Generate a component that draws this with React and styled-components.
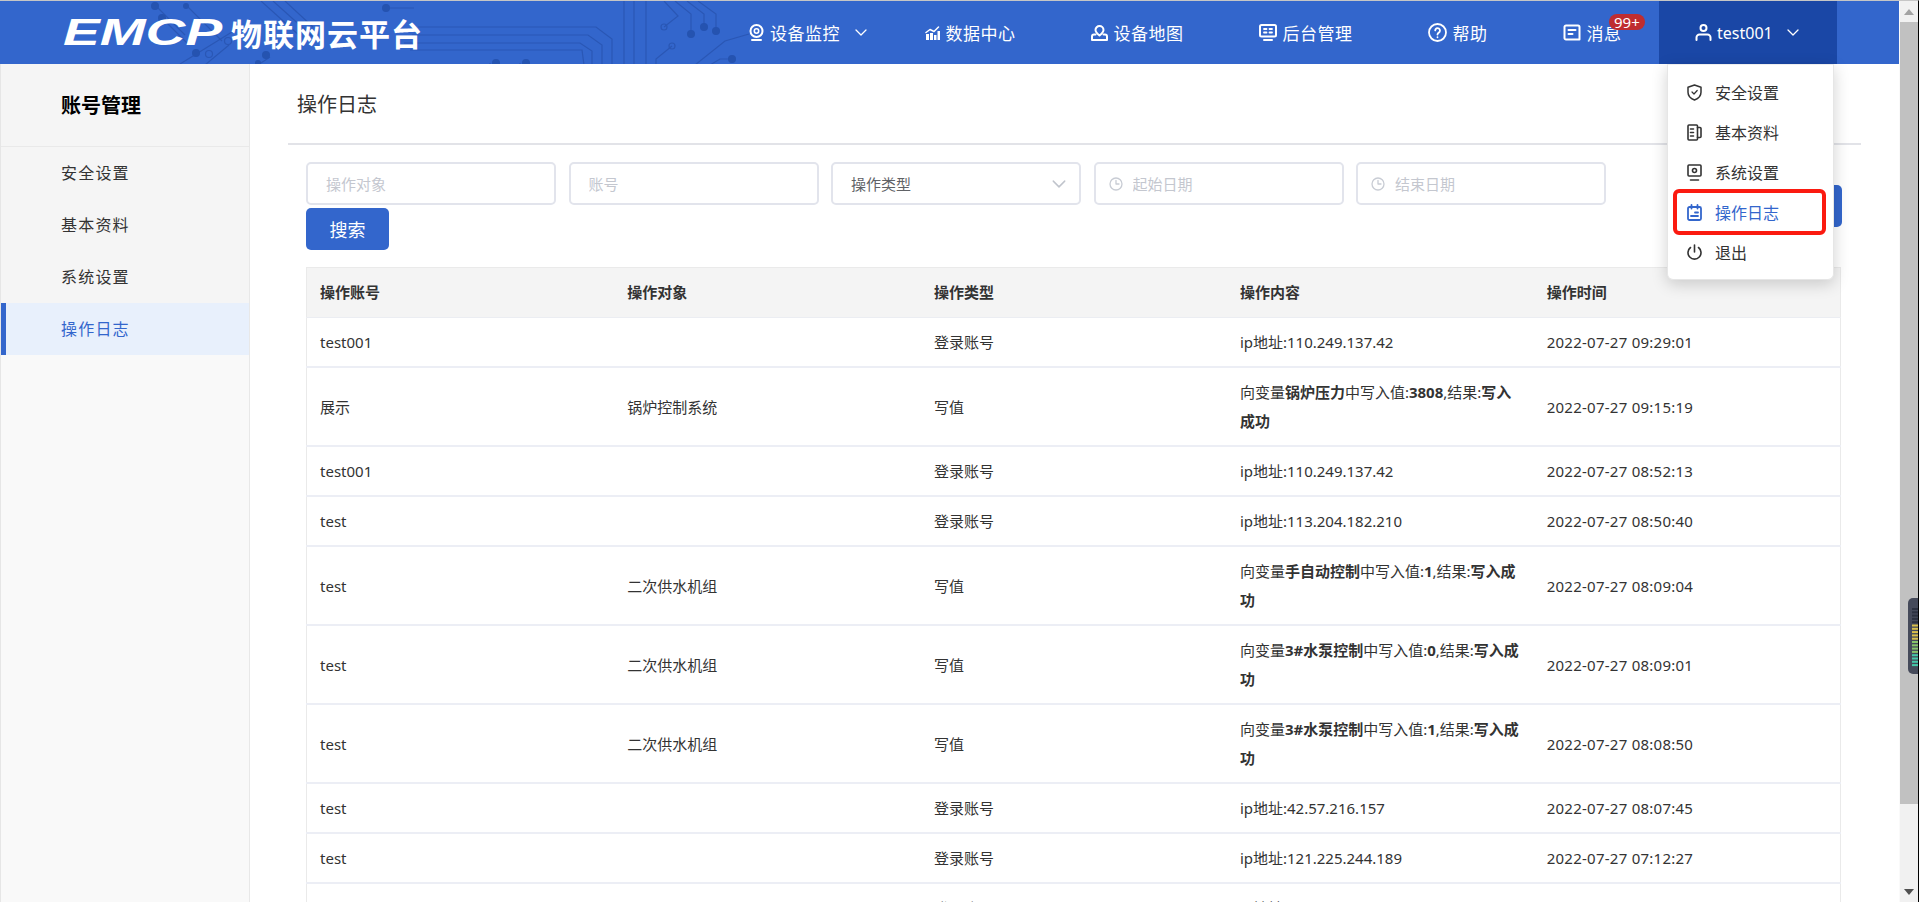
import React from "react";
import styled, { createGlobalStyle } from "styled-components";

const GlobalStyle = createGlobalStyle`
  html, body {
    margin: 0;
    padding: 0;
    height: 100%;
    overflow: hidden;
    background: #fff;
    font-family: "Noto Sans", "Noto Sans CJK SC", sans-serif;
  }
  * { box-sizing: border-box; }
`;

const Page = styled.div`
  width: 1919px;
  height: 902px;
  overflow: hidden;
  display: flex;
  flex-direction: column;
  border-top: 1px solid #c6c6c6;
  border-right: 1px solid #000;
`;

const Body = styled.div`
  flex: 1;
  min-height: 0;
  display: flex;
`;

const Main = styled.div`
  width: 1899px;
  display: flex;
  flex-direction: column;
`;

/* header */
const Header = styled.header`
  position: relative;
  height: 63px;
  flex: none;
  background: #3366cc;
  display: flex;
  align-items: center;
  justify-content: space-between;
  padding: 0 62px 0 63px;
  color: #fff;
`;

const Circuit = styled.svg`
  position: absolute;
  left: 0;
  top: 0;
  pointer-events: none;
`;

const Brand = styled.div`
  position: relative;
  display: flex;
  align-items: center;
`;

const BrandMark = styled.span`
  display: block;
  width: 168px;
  font: italic 700 36px/36px "Liberation Sans", sans-serif;
  transform: scaleX(1.53);
  transform-origin: left center;
`;

const BrandName = styled.span`
  font: 700 31px/40px "Noto Sans CJK SC", sans-serif;
  letter-spacing: 1px;
`;

const Nav = styled.nav`
  position: relative;
  display: flex;
  height: 100%;
`;

const NavItem = styled.div`
  position: relative;
  display: flex;
  align-items: center;
  gap: 6px;
  padding: 0 ${(p) => (p.$caret ? "20px" : "37.5px")} 0 37.5px;
  font: 400 17px/24px "Noto Sans CJK SC", sans-serif;
  letter-spacing: 0.5px;
`;

const NavChevron = styled.svg`
  margin-left: 9px;
`;

const Badge = styled.span`
  position: absolute;
  left: 84px;
  top: 13px;
  height: 16px;
  padding: 0 5px;
  border-radius: 8px;
  background: #bf2d30;
  font: 400 15px/16px "Noto Sans", sans-serif;
  letter-spacing: 0;
  color: #fff;
`;

const UserBlock = styled.div`
  position: relative;
  display: flex;
  align-items: center;
  gap: 5px;
  width: 178px;
  padding-left: 36px;
  background: #1a47a6;
  font: 400 16px/24px "Noto Sans", sans-serif;
`;

const UserMenu = styled.div`
  position: absolute;
  left: 8px;
  top: 63px;
  width: 167px;
  height: 216px;
  padding: 7px 0;
  z-index: 5;
  background: #fff;
  border: 1px solid #e6e6e6;
  border-top-color: #eee;
  border-radius: 0 0 6px 6px;
  box-shadow: 0 4px 16px rgba(0, 0, 0, 0.18);
  color: #333;
`;

const MenuItem = styled.div`
  position: relative;
  height: 40px;
  display: flex;
  align-items: center;
  gap: 13px;
  padding-left: 19px;
  font: 400 16px/24px "Noto Sans CJK SC", sans-serif;
  color: ${(p) => (p.$active ? "#3366cc" : "#333")};

  ${(p) =>
    p.$active &&
    `&::after {
      content: "";
      position: absolute;
      left: 5px;
      right: 7px;
      top: -3px;
      bottom: -3px;
      border: 4px solid #fb1a10;
      border-radius: 6px;
    }`}
`;

/* sidebar */
const Sidebar = styled.aside`
  width: 250px;
  flex: none;
  background: #f9f9f9;
  border-left: 1px solid #e6e6e6;
  border-right: 1px solid #e8e8e8;
`;

const SideTitle = styled.div`
  height: 83px;
  padding-left: 60px;
  background: #f5f5f5;
  border-bottom: 1px solid #e9e9e9;
  font: 700 20px/81px "Noto Sans CJK SC", sans-serif;
  color: #000;
`;

const SideList = styled.div`
  background: #f5f5f5;
`;

const SideItem = styled.div`
  height: 52px;
  padding-left: ${(p) => (p.$active ? "55px" : "60px")};
  border-left: ${(p) => (p.$active ? "5px solid #3366cc" : "none")};
  background: ${(p) => (p.$active ? "#e8f0fc" : "transparent")};
  font: 400 16px/50px "Noto Sans CJK SC", sans-serif;
  letter-spacing: 1.2px;
  color: ${(p) => (p.$active ? "#3366cc" : "#333")};
`;

/* content */
const Content = styled.main`
  flex: 1;
  min-width: 0;
  padding: 0 38px;
  overflow: hidden;
`;

const PageTitle = styled.h1`
  margin: 0;
  height: 81px;
  padding-left: 9px;
  border-bottom: 2px solid #e2e3e8;
  font: 400 20px/80px "Noto Sans CJK SC", sans-serif;
  color: #333;
`;

const Toolbar = styled.div`
  display: flex;
  justify-content: space-between;
  align-items: flex-start;
  padding: 17px 19px 0 18px;
`;

const Filters = styled.div`
  width: 1312px;
  display: flex;
  flex-wrap: wrap;
  gap: 3px 12.5px;
`;

const Field = styled.div`
  width: 250px;
  height: 43px;
  display: flex;
  align-items: center;
  gap: 10px;
  padding: 0 13px 0 ${(p) => (p.$date ? "13px" : "18px")};
  border: 2px solid #e2e4ec;
  border-radius: 5px;
  background: #fff;
`;

const FieldInput = styled.input`
  flex: 1;
  min-width: 0;
  border: 0;
  outline: 0;
  padding: 0;
  background: transparent;
  font: 400 15px/22px "Noto Sans CJK SC", sans-serif;

  &::placeholder {
    color: #c4c7cf;
    opacity: 1;
  }
`;

const SelectLabel = styled.span`
  flex: 1;
  font: 400 15px/22px "Noto Sans CJK SC", sans-serif;
  color: #606266;
`;

const PrimaryButton = styled.button`
  width: 83px;
  height: 42px;
  margin-top: ${(p) => p.$top || 0};
  border: 0;
  border-radius: 5px;
  background: #3366cc;
  color: #fff;
  font: 400 18px/42px "Noto Sans CJK SC", sans-serif;
  padding: 0;
`;

const LogTable = styled.table`
  width: 1535px;
  margin: 17px 0 0 18px;
  table-layout: fixed;
  border-collapse: collapse;
  border-left: 1px solid #eaeaea;
  border-right: 1px solid #eaeaea;
  border-top: 1px solid #eaeaea;
  font: 400 15px/29px "Noto Sans", "Noto Sans CJK SC", sans-serif;
  color: #333;
`;

const HeadCell = styled.th`
  padding: 10px 14px 10px 13px;
  background: #f4f4f4;
  border-bottom: 1px solid #ebedf2;
  text-align: left;
  font-weight: 600;

  &:nth-child(2),
  &:nth-child(3) {
    padding-left: 14px;
  }
`;

const Cell = styled.td`
  padding: 10px 11px 9px 13px;
  border-bottom: 2px solid #eceef5;
  vertical-align: middle;
  letter-spacing: ${(p) => (p.$time ? "0.25px" : "0")};

  &:nth-child(2),
  &:nth-child(3) {
    padding-left: 14px;
  }

  b {
    font-weight: 700;
  }
`;

/* fake browser scrollbar */
const ScrollTrack = styled.div`
  position: relative;
  width: 19px;
  flex: none;
  background: #f1f1f1;
  border-left: 1px solid #fafafa;
  display: flex;
  flex-direction: column;
  align-items: stretch;
`;

const ScrollArrow = styled.div`
  height: 21px;
  flex: none;
  display: flex;
  align-items: center;
  justify-content: center;
  margin-top: ${(p) => (p.$bottom ? "auto" : "0")};

  &::before {
    content: "";
    border-left: 5px solid transparent;
    border-right: 5px solid transparent;
    ${(p) =>
      p.$bottom
        ? "border-top: 6px solid #505050;"
        : "border-bottom: 6px solid #a3a3a3;"}
  }
`;

const ScrollThumb = styled.div`
  height: 782px;
  flex: none;
  background: #c1c1c1;
`;

const MeterWidget = styled.svg`
  position: absolute;
  right: 0;
  top: 597px;
`;

const Svg = ({ w, h, vb, children, color = "currentColor", sw = 2 }) => (
  <svg
    width={w}
    height={h}
    viewBox={vb || `0 0 ${w} ${h}`}
    fill="none"
    stroke={color}
    strokeWidth={sw}
    strokeLinecap="round"
    strokeLinejoin="round"
    style={{ flex: "none" }}
  >
    {children}
  </svg>
);

const IconCam = () => (
  <Svg w={15} h={17}>
    <circle cx="7.5" cy="7" r="6" />
    <circle cx="7.5" cy="7" r="2.2" strokeWidth="1.6" />
    <path d="M3 16h9" />
  </Svg>
);

const IconChart = () => (
  <Svg w={15} h={14} sw={0}>
    <path
      d="M1 8h3v6H1zM5 7h3v7H5zM9 9h2.500v5H9zM12.500 5H15v9h-2.500z"
      fill="currentColor"
    />
    <path d="M1 6.500 5 3.500l4 2 4.500-4.500" stroke="currentColor" strokeWidth="1.5" />
  </Svg>
);

const IconUserPin = () => (
  <Svg w={17} h={16}>
    <path d="M8.500 1a4 4 0 0 1 4 4c0 2.300-2.200 4-4 5.500-1.800-1.500-4-3.200-4-5.500a4 4 0 0 1 4-4z" />
    <path d="M4.500 9.500H3a2 2 0 0 0-2 2V15h15v-3.500a2 2 0 0 0-2-2h-1.500" />
  </Svg>
);

const IconAdmin = () => (
  <Svg w={18} h={17}>
    <rect x="1" y="1" width="16" height="11.500" rx="1.500" />
    <path d="M5 16h8" />
    <path d="M5 5h2.500M5 8.500h2.500M10.500 5H13M10.500 8.500H13" strokeWidth="1.800" />
  </Svg>
);

const IconHelp = () => (
  <Svg w={19} h={19} sw={1.8}>
    <circle cx="9.500" cy="9.500" r="8.500" />
    <path d="M7.200 7.400a2.400 2.400 0 1 1 3.600 2.200c-.9.500-1.300 1-1.300 2" />
    <path d="M9.500 14.200v.1" />
  </Svg>
);

const IconMessage = () => (
  <Svg w={18} h={17}>
    <path d="M3 1.500h12a1.500 1.500 0 0 1 1.500 1.500v12.500H3A1.500 1.500 0 0 1 1.500 14V3A1.500 1.500 0 0 1 3 1.500z" />
    <path d="M5.500 6h7M5.500 10h4" />
  </Svg>
);

const IconUser = () => (
  <Svg w={17} h={17}>
    <circle cx="8.500" cy="4" r="3" />
    <path d="M1.500 16v-2.500a3 3 0 0 1 3-3h8a3 3 0 0 1 3 3V16" />
  </Svg>
);

const IconChevron = ({ color = "currentColor", w = 12, h = 7 }) => (
  <NavChevron width={w} height={h} viewBox="0 0 12 7" fill="none" stroke={color} strokeWidth="1.300" strokeLinecap="round" strokeLinejoin="round">
    <path d="M1 1l5 5 5-5" />
  </NavChevron>
);

const IconShield = () => (
  <Svg w={15} h={17} sw={1.500}>
    <path d="M7.500 1 14 3.300v5c0 3.700-2.700 6.300-6.500 7.700C3.700 14.600 1 12 1 8.300v-5z" />
    <path d="m5 8 2 2 3.200-3.500" strokeWidth="1.200" />
  </Svg>
);

const IconBook = () => (
  <Svg w={15} h={17} sw={1.600}>
    <rect x="1" y="1" width="9.500" height="15" rx="1" />
    <path d="M3.500 5h3M3.500 8.500h3M3.500 12h3" />
    <path d="M10.500 3.500H13a1 1 0 0 1 1 1v8a1 1 0 0 1-1 1h-2.500" />
  </Svg>
);

const IconDisplay = () => (
  <Svg w={15} h={17} sw={1.600}>
    <rect x="1" y="1" width="13" height="11" rx="1" />
    <circle cx="7.500" cy="6.500" r="2" />
    <path d="M3.500 16h8" />
  </Svg>
);

const IconCalendar = () => (
  <Svg w={15} h={17} sw={1.800}>
    <rect x="1" y="3" width="13" height="13" rx="1.500" />
    <path d="M4.500 1v3.500M10.500 1v3.500" />
    <path d="M8 8.500h3M4 12h7" />
  </Svg>
);

const IconPower = () => (
  <Svg w={15} h={17} sw={1.600}>
    <path d="M7.500 1v7" />
    <path d="M3.500 3.500a6.500 6.500 0 1 0 8 0" />
  </Svg>
);

const IconClock = () => (
  <Svg w={14} h={14} sw={1.300} color="#c8ccd4">
    <circle cx="7" cy="7" r="6" />
    <path d="M7 3.500V7h3" />
  </Svg>
);

const CircuitLines = () => (
  <Circuit width="800" height="63" viewBox="0 0 800 63" fill="none" stroke="#2a57b5" strokeWidth="1.200">
    <path d="M155 4l30 30M186 4l36 36M261 0l40 36M273 0l40 36M285 0l28 26" />
    <path d="M162 17l26 26M390 7h24M418 26h178l16 12v26M412 34h176l14 10v20M404 42h176l12 8v14M410 49h172l2 15" />
    <path d="M624 0v64M646 0v64M634 0v64" />
    <path d="M664 0l14 15-14 11M675 0l16 13v20M687 0l17 13v13M698 0l18 13v17" />
    <path d="M672 45l-16 13v6M749 33l-24 7-30 24M732 58h-12l-10 6" />
    <path d="M240 26l-60 37M205 64l24-20M258 64l12-8M490 64v-2M520 64v-2" />
    <g fill="#2553b0" stroke="none">
      <circle cx="155" cy="5" r="4" />
      <circle cx="186" cy="5" r="3" />
      <circle cx="162" cy="17" r="4" />
      <circle cx="196" cy="52" r="4" />
      <circle cx="258" cy="62" r="3" />
      <circle cx="266" cy="54" r="4" />
      <circle cx="386" cy="7" r="4" />
      <circle cx="496" cy="62" r="4" />
      <circle cx="526" cy="62" r="4" />
      <circle cx="691" cy="33" r="4" />
      <circle cx="704" cy="26" r="4" />
      <circle cx="716" cy="30" r="4" />
      <circle cx="732" cy="58" r="4" />
    </g>
    <circle cx="209" cy="53" r="3.500" />
    <circle cx="228" cy="40" r="3.500" />
    <circle cx="664" cy="26" r="3" />
    <circle cx="672" cy="45" r="3" />
  </Circuit>
);

const navItems = [
  { key: "monitor", icon: <IconCam />, label: "设备监控", caret: true },
  { key: "data", icon: <IconChart />, label: "数据中心" },
  { key: "map", icon: <IconUserPin />, label: "设备地图" },
  { key: "admin", icon: <IconAdmin />, label: "后台管理" },
  { key: "help", icon: <IconHelp />, label: "帮助" },
];

const menuItems = [
  { icon: <IconShield />, label: "安全设置" },
  { icon: <IconBook />, label: "基本资料" },
  { icon: <IconDisplay />, label: "系统设置" },
  { icon: <IconCalendar />, label: "操作日志", active: true },
  { icon: <IconPower />, label: "退出" },
];

const sideItems = ["安全设置", "基本资料", "系统设置", "操作日志"];
const columns = ["操作账号", "操作对象", "操作类型", "操作内容", "操作时间"];

const write = (name, val) => (
  <>
    向变量<b>{name}</b>中写入值:<b>{val}</b>,结果:<b>写入成功</b>
  </>
);

const rows = [
  ["test001", "", "登录账号", "ip地址:110.249.137.42", "2022-07-27 09:29:01"],
  ["展示", "锅炉控制系统", "写值", write("锅炉压力", "3808"), "2022-07-27 09:15:19"],
  ["test001", "", "登录账号", "ip地址:110.249.137.42", "2022-07-27 08:52:13"],
  ["test", "", "登录账号", "ip地址:113.204.182.210", "2022-07-27 08:50:40"],
  ["test", "二次供水机组", "写值", write("手自动控制", "1"), "2022-07-27 08:09:04"],
  ["test", "二次供水机组", "写值", write("3#水泵控制", "0"), "2022-07-27 08:09:01"],
  ["test", "二次供水机组", "写值", write("3#水泵控制", "1"), "2022-07-27 08:08:50"],
  ["test", "", "登录账号", "ip地址:42.57.216.157", "2022-07-27 08:07:45"],
  ["test", "", "登录账号", "ip地址:121.225.244.189", "2022-07-27 07:12:27"],
  ["test", "", "登录账号", "ip地址:121.225.244.189", "2022-07-27 07:10:13"],
];

const meterColor = (i) => {
  if (i < 5) return "#2c3140";
  if (i < 10) return "#d9c04a";
  if (i < 14) return "#86c46a";
  return "#45c9a8";
};

const App = () => {
  return (
    <Page>
      <GlobalStyle />
      <Body>
        <Main>
          <Header>
            <CircuitLines />
            <Brand>
              <BrandMark>EMCP</BrandMark>
              <BrandName>物联网云平台</BrandName>
            </Brand>
            <Nav>
              {navItems.map((n) => (
                <NavItem key={n.key} $caret={n.caret}>
                  {n.icon}
                  {n.label}
                  {n.caret && <IconChevron />}
                </NavItem>
              ))}
              <NavItem>
                <IconMessage />
                消息
                <Badge>99+</Badge>
              </NavItem>
              <UserBlock>
                <IconUser />
                test001
                <IconChevron />
                <UserMenu>
                  {menuItems.map((m) => (
                    <MenuItem key={m.label} $active={m.active}>
                      {m.icon}
                      {m.label}
                    </MenuItem>
                  ))}
                </UserMenu>
              </UserBlock>
            </Nav>
          </Header>
          <Body>
            <Sidebar>
              <SideTitle>账号管理</SideTitle>
              <SideList>
                {sideItems.map((s) => (
                  <SideItem key={s} $active={s === "操作日志"}>
                    {s}
                  </SideItem>
                ))}
              </SideList>
            </Sidebar>
            <Content>
              <PageTitle>操作日志</PageTitle>
              <Toolbar>
                <Filters>
                  <Field>
                    <FieldInput placeholder="操作对象" />
                  </Field>
                  <Field>
                    <FieldInput placeholder="账号" />
                  </Field>
                  <Field>
                    <SelectLabel>操作类型</SelectLabel>
                    <IconChevron color="#c0c4cc" w={14} h={8} />
                  </Field>
                  <Field $date>
                    <IconClock />
                    <FieldInput placeholder="起始日期" />
                  </Field>
                  <Field $date>
                    <IconClock />
                    <FieldInput placeholder="结束日期" />
                  </Field>
                  <PrimaryButton>搜索</PrimaryButton>
                </Filters>
                <PrimaryButton $top="23px">导出</PrimaryButton>
              </Toolbar>
              <LogTable>
                <thead>
                  <tr>
                    {columns.map((c) => (
                      <HeadCell key={c}>{c}</HeadCell>
                    ))}
                  </tr>
                </thead>
                <tbody>
                  {rows.map((r, i) => (
                    <tr key={i}>
                      {r.map((v, j) => (
                        <Cell key={j} $time={j === 4}>{v}</Cell>
                      ))}
                    </tr>
                  ))}
                </tbody>
              </LogTable>
            </Content>
          </Body>
        </Main>
        <ScrollTrack>
          <ScrollArrow />
          <ScrollThumb />
          <ScrollArrow $bottom />
          <MeterWidget width="10" height="76" viewBox="0 0 10 76">
            <path d="M10 0H5a5 5 0 0 0-5 5v66a5 5 0 0 0 5 5h5z" fill="#454a5a" />
            {Array.from({ length: 18 }).map((_, i) => (
              <rect key={i} x="4" y={10 + i * 3.3} width="6" height="2" fill={meterColor(i)} />
            ))}
          </MeterWidget>
        </ScrollTrack>
      </Body>
    </Page>
  );
};

export default App;
